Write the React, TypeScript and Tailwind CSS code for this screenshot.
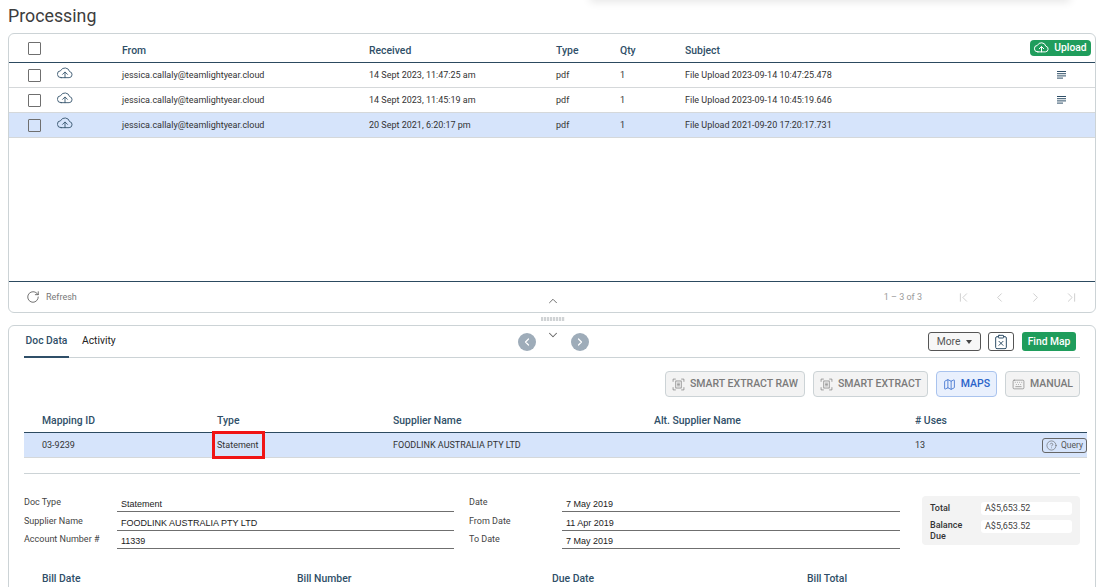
import {
  ChevronDown,
  ChevronFirst,
  ChevronLast,
  ChevronLeft,
  ChevronRight,
  ChevronUp,
  CircleHelp,
  ClipboardX,
  Keyboard,
  Map as MapIcon,
  RotateCw,
} from "lucide-react";

const rows = [
  { received: "14 Sept 2023, 11:47:25 am", subject: "File Upload 2023-09-14 10:47:25.478", notes: true },
  { received: "14 Sept 2023, 11:45:19 am", subject: "File Upload 2023-09-14 10:45:19.646", notes: true },
  { received: "20 Sept 2021, 6:20:17 pm", subject: "File Upload 2021-09-20 17:20:17.731", notes: false },
];

const Checkbox = () => (
  <div className="w-[13px] h-[13px] shrink-0 border border-[#6f6f6f] rounded-[1px] bg-transparent" />
);

const NotesIcon = () => (
  <svg width="11" height="10" viewBox="0 0 11 10" className="text-[#2f4f68]">
    <path d="M1 1.5h9M1 3.7h9M1 5.9h9M1 8.1h6" stroke="currentColor" strokeWidth="1" fill="none" />
  </svg>
);

const CloudIcon = ({ size, width = 1.3, className }: { size: number; width?: number; className?: string }) => (
  <svg
    width={size}
    height={size}
    viewBox="0 0 24 24"
    fill="none"
    stroke="currentColor"
    strokeWidth={width}
    strokeLinejoin="round"
    strokeLinecap="round"
    className={className}
  >
    <path d="M6.2 19h12a4.6 4.6 0 0 0 .7-9.1A7.2 7.2 0 0 0 5.4 8.6 5.2 5.2 0 0 0 6.2 19z" />
    <path d="M12 19v-8M8.4 14l3.6-3.6 3.6 3.6" />
  </svg>
);

const ScanDocIcon = () => (
  <svg width="13" height="13" viewBox="0 0 24 24" fill="none" stroke="currentColor" strokeWidth="1.3">
    <path d="M2 7V2h5M17 2h5v5M22 17v5h-5M7 22H2v-5" />
    <rect x="7" y="5.5" width="10" height="13" />
    <path d="M9.5 9.5h5M9.5 12h5M9.5 14.5h5" />
  </svg>
);

const ExtractButton = ({
  label,
  icon,
  active,
  width,
}: {
  label: string;
  icon: React.ReactNode;
  active?: boolean;
  width: string;
}) => (
  <div
    className={
      active
        ? `${width} h-[26px] flex items-center justify-center gap-[5px] rounded-[4px] border border-[#a9c3ee] bg-[#e9f0fd] text-[#2a63c9] text-[10.5px] font-medium`
        : `${width} h-[26px] flex items-center justify-center gap-[5px] rounded-[4px] border border-[#ccd3d6] bg-[#f3f3f3] text-[#7a7a7a] text-[10.5px] font-medium`
    }
  >
    {icon}
    {label}
  </div>
);

const Field = ({ label, value }: { label: string; value: string }) => (
  <div className="flex items-start h-[18.5px]">
    <div className="w-[93px] text-[9px] leading-[11px] text-[#444]">{label}</div>
    <div className="flex-1 h-[15px] border-b border-[#6f6f6f] pl-1 font-['Liberation_Sans',sans-serif] text-[9px] leading-[14px] text-[#222]">
      {value}
    </div>
  </div>
);

export default function App() {
  return (
    <div className="relative w-[1096px] h-[587px] overflow-hidden bg-white font-['Roboto',sans-serif] text-[#333]">
      <div className="absolute left-[590px] top-[-10px] w-[480px] h-[10px] shadow-[0_2px_8px_rgba(0,0,0,0.1)]" />

      <div className="h-[33px] pl-2 text-[17.8px] leading-[32px] text-[#3d3d3d]">Processing</div>

      <div className="ml-2 h-[280px] flex flex-col rounded-[6px] border border-[#ccd3d6]">
        <div className="h-[29px] grid grid-cols-[113px_247px_187px_64px_65px_1fr] items-center border-b border-[#2c4a60] text-[10.4px] font-medium text-[#2f4f68]">
          <div className="pl-[19px]">
            <Checkbox />
          </div>
          <div className="pt-[6px]">From</div>
          <div className="pt-[6px]">Received</div>
          <div className="pt-[6px]">Type</div>
          <div className="pt-[6px]">Qty</div>
          <div className="flex items-center justify-between pr-[4px]">
            <span className="pt-[6px]">Subject</span>
            <div className="w-[61px] h-[16px] flex items-center justify-center gap-[5px] rounded-[4px] bg-[#1f9d5c] text-white text-[10.3px] font-medium">
              <CloudIcon size={15} width={1.6} />
              Upload
            </div>
          </div>
        </div>

        {rows.map((row, i) => (
          <div
            key={i}
            className={
              i === 2
                ? "h-[25px] shrink-0 grid grid-cols-[113px_247px_187px_64px_65px_1fr] items-center border-b border-[#d5d8da] bg-[#d6e4fb] text-[9px] text-[#333]"
                : "h-[25px] shrink-0 grid grid-cols-[113px_247px_187px_64px_65px_1fr] items-center border-b border-[#d5d8da] text-[9px] text-[#333]"
            }
          >
            <div className="pl-[19px] flex items-center">
              <Checkbox />
              <CloudIcon size={16} className="ml-[16px] mb-[5px] text-[#2f4f68]" />
            </div>
            <div className="pt-[2px]">jessica.callaly@teamlightyear.cloud</div>
            <div className="pt-[2px]">{row.received}</div>
            <div className="pt-[2px]">pdf</div>
            <div className="pt-[2px]">1</div>
            <div className="flex items-center justify-between pr-[28px]">
              <span className="pt-[2px]">{row.subject}</span>
              {row.notes && <NotesIcon />}
            </div>
          </div>
        ))}

        <div className="flex-1" />

        <div className="h-[31px] shrink-0 flex items-center justify-between border-t border-[#2c4a60] pl-[17px] pr-[16px] text-[#9a9a9a]">
          <div className="flex items-center gap-[6px] text-[9px] text-[#777]">
            <RotateCw size={14} strokeWidth={1.4} className="text-[#555]" />
            <span className="pt-[2px]">Refresh</span>
          </div>
          <div className="flex items-center">
            <span className="text-[9px] mr-[34px] pt-[2px]">1 – 3 of 3</span>
            <div className="flex items-center gap-[21px] text-[#c4c4c4]">
              <ChevronFirst size={15} strokeWidth={1.3} />
              <ChevronLeft size={15} strokeWidth={1.3} />
              <ChevronRight size={15} strokeWidth={1.3} />
              <ChevronLast size={15} strokeWidth={1.3} />
            </div>
          </div>
        </div>
      </div>

      <div className="h-[12px] flex items-center justify-center pl-[10px]">
        <div className="w-[24px] h-[4px] bg-[repeating-linear-gradient(90deg,#d0d3d5_0,#d0d3d5_2px,#f5f5f5_2px,#f5f5f5_3px)]" />
      </div>

      <ChevronUp size={14} strokeWidth={1.6} className="absolute left-[546px] top-[294px] text-[#666]" />

      <div className="ml-2 h-[300px] rounded-t-[6px] border border-[#ccd3d6] px-[15px]">
        <div className="relative h-[32px] flex items-center border-b border-[#ccd3d6]">
          <div className="relative w-[45px] h-full pb-[2px] flex items-center justify-center text-[10.3px] font-medium text-[#2f4f68]">
            Doc Data
            <div className="absolute left-0 right-0 bottom-[-1px] h-[2px] bg-[#2f4f68]" />
          </div>
          <div className="ml-[13px] pb-[2px] text-[10.3px] text-[#222]">Activity</div>

          <div className="ml-[402px] flex items-start gap-[10px]">
            <div className="w-[18px] h-[18px] rounded-full bg-[#9eacb9] flex items-center justify-center text-white">
              <ChevronLeft size={12} strokeWidth={2.4} />
            </div>
            <ChevronDown size={14} strokeWidth={1.8} className="mt-[-5px] text-[#666]" />
            <div className="w-[18px] h-[18px] ml-[1px] rounded-full bg-[#9eacb9] flex items-center justify-center text-white">
              <ChevronRight size={12} strokeWidth={2.4} />
            </div>
          </div>

          <div className="ml-auto pr-[4px] flex items-center">
            <div className="w-[53px] h-[19px] flex items-center justify-center gap-[6px] rounded-[3px] border border-[#555] bg-[#f7f7f7] text-[10.3px] text-[#555]">
              More
              <span className="w-0 h-0 border-x-[3.5px] border-x-transparent border-t-[4px] border-t-[#444]" />
            </div>
            <div className="ml-[7px] w-[26px] h-[19px] flex items-center justify-center rounded-[3px] border border-[#555]">
              <ClipboardX size={16} strokeWidth={1.5} className="text-[#2f4f68]" />
            </div>
            <div className="ml-[8px] w-[54px] h-[19px] flex items-center justify-center rounded-[3px] bg-[#1f9d5c] text-[10.3px] font-medium text-white">
              Find Map
            </div>
          </div>
        </div>

        <div className="mt-[13px] flex justify-end gap-[8px]">
          <ExtractButton width="w-[140px]" label="SMART EXTRACT RAW" icon={<ScanDocIcon />} />
          <ExtractButton width="w-[115px]" label="SMART EXTRACT" icon={<ScanDocIcon />} />
          <ExtractButton width="w-[61px]" active label="MAPS" icon={<MapIcon size={13} strokeWidth={1.4} />} />
          <ExtractButton width="w-[75px]" label="MANUAL" icon={<Keyboard size={13} strokeWidth={1.2} />} />
        </div>

        <div className="mr-[-7px]">
          <div className="h-[36px] pb-[3px] grid grid-cols-[193px_176px_261px_261px_1fr] items-end border-b border-[#2c4a60] text-[10.4px] font-medium text-[#2f4f68]">
            <div className="pl-[18px]">Mapping ID</div>
            <div>Type</div>
            <div>Supplier Name</div>
            <div>Alt. Supplier Name</div>
            <div># Uses</div>
          </div>
          <div className="relative h-[25px] grid grid-cols-[193px_176px_261px_261px_1fr] items-center border-b border-[#d5d8da] bg-[#d6e4fb] text-[9px] text-[#333]">
            <div className="pl-[18px] pt-[2px]">03-9239</div>
            <div className="pt-[2px]">Statement</div>
            <div className="pt-[2px]">FOODLINK AUSTRALIA PTY LTD</div>
            <div />
            <div className="flex items-center justify-between">
              <span className="pt-[2px]">13</span>
              <div className="w-[45px] h-[15px] flex items-center justify-center gap-[4px] rounded-[3px] border border-[#666] text-[8.5px] text-[#555]">
                <CircleHelp size={11} strokeWidth={1.2} />
                Query
              </div>
            </div>
            <div className="absolute left-[188px] top-[-2px] w-[53px] h-[28px] border-[3px] border-[#f01414]" />
          </div>
        </div>

        <div className="mt-[15px] h-px bg-[#ccd3d6]" />

        <div className="mt-[23px] flex items-start">
          <div className="w-[430px] flex flex-col">
            <Field label="Doc Type" value="Statement" />
            <Field label="Supplier Name" value="FOODLINK AUSTRALIA PTY LTD" />
            <Field label="Account Number #" value="11339" />
          </div>
          <div className="ml-[15px] w-[431px] flex flex-col">
            <Field label="Date" value="7 May 2019" />
            <Field label="From Date" value="11 Apr 2019" />
            <Field label="To Date" value="7 May 2019" />
          </div>
          <div className="ml-[22px] w-[158px] h-[49px] mt-[-1px] rounded-[4px] bg-[#f3f3f3] pl-[8px] pr-[8px] pt-[6px] text-[9px]">
            <div className="flex items-center">
              <div className="w-[51px] font-medium text-[#333]">Total</div>
              <div className="flex-1 h-[13px] rounded-[3px] bg-white pl-[4px] leading-[13px] text-[#444]">A$5,653.52</div>
            </div>
            <div className="mt-[4px] flex items-start">
              <div className="w-[51px] leading-[11px] font-medium text-[#333]">
                Balance
                <br />
                Due
              </div>
              <div className="flex-1 h-[13px] rounded-[3px] bg-white pl-[4px] leading-[13px] text-[#444]">A$5,653.52</div>
            </div>
          </div>
        </div>

        <div className="mt-[18px] pl-[18px] grid grid-cols-[255px_255px_255px_1fr] text-[10.4px] font-medium text-[#2f4f68]">
          <div>Bill Date</div>
          <div>Bill Number</div>
          <div>Due Date</div>
          <div>Bill Total</div>
        </div>
      </div>
    </div>
  );
}
